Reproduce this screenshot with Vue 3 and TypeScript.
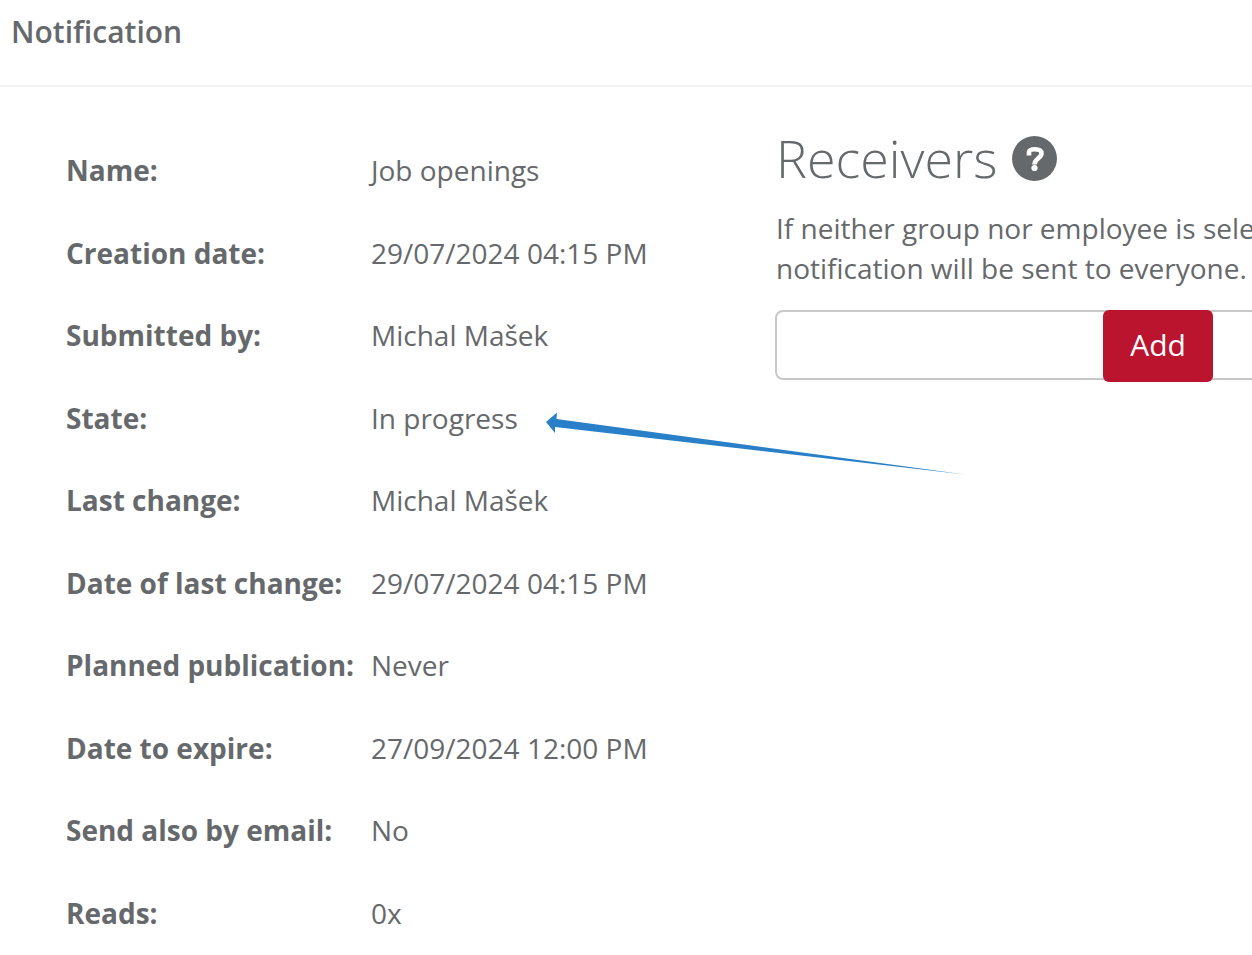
<script setup lang="ts">
interface Detail { label: string; value: string }
const details: Detail[] = [
  { label: 'Name:', value: 'Job openings' },
  { label: 'Creation date:', value: '29/07/2024 04:15 PM' },
  { label: 'Submitted by:', value: 'Michal Mašek' },
  { label: 'State:', value: 'In progress' },
  { label: 'Last change:', value: 'Michal Mašek' },
  { label: 'Date of last change:', value: '29/07/2024 04:15 PM' },
  { label: 'Planned publication:', value: 'Never' },
  { label: 'Date to expire:', value: '27/09/2024 12:00 PM' },
  { label: 'Send also by email:', value: 'No' },
  { label: 'Reads:', value: '0x' },
]
</script>

<template>
  <div class="page">
    <header class="header"><h1>Notification</h1></header>
    <main class="content">
      <dl class="details">
        <div v-for="d in details" :key="d.label" class="row">
          <dt>{{ d.label }}</dt>
          <dd>{{ d.value }}</dd>
        </div>
      </dl>
      <section class="receivers">
        <h2>
          <span>Receivers</span>
          <button class="help" type="button" aria-label="Help">
            <svg viewBox="0 0 45 45" aria-hidden="true">
              <circle cx="22.5" cy="22.5" r="22.5" fill="#66696b" />
              <path d="M17 19.5V16Q17.500 13.300 23 13.300Q29.500 13.300 29.500 17.500C29.500 22.300 22.500 22.500 22.500 28.500" fill="none" stroke="#fff" stroke-width="4.600" />
              <circle cx="22.500" cy="32" r="3.100" fill="#fff" />
            </svg>
          </button>
        </h2>
        <p><label for="receiver">If neither group nor employee is selected,<br>notification will be sent to everyone.</label></p>
        <div class="picker">
          <input id="receiver" type="text">
          <button class="add" type="button">Add</button>
        </div>
      </section>
    </main>
    <svg class="arrow" viewBox="0 0 420 64" aria-hidden="true">
      <path fill="#2a80c8" d="M0 10L11 0.500L10.500 7L419 62.500L9 15L9 21Z" />
    </svg>
  </div>
</template>

<style>
body { margin: 0; background: #fff; }
</style>

<style scoped>
.page { position: relative; overflow: hidden; color: #66696b; font: 28px/40px "Open Sans", sans-serif; }
.header { padding: 12px 11px 33px; border-bottom: 2px solid #f2f2f2; }
h1 { margin: 0; font-size: 30px; line-height: 40px; font-weight: 600; }
.content { display: grid; grid-template-columns: 710px minmax(540px, 1fr); align-items: start; padding: 0 0 20px 66px; }
.details { display: flex; flex-direction: column; justify-content: space-between; min-height: 783px; margin: 63px 0 0; }
.row { display: grid; grid-template-columns: 305px 1fr; }
dt { font-weight: 700; white-space: nowrap; }
dd { margin: 0; }
.receivers { padding-top: 36px; }
h2 { display: flex; align-items: center; gap: 15px; margin: 0; font-size: 52px; line-height: 70px; font-weight: 300; }
.help { width: 45px; height: 45px; padding: 0; border: 0; background: none; }
.help svg { display: block; width: 100%; height: 100%; }
p { margin: 15px 0 22px; white-space: nowrap; }
.picker { display: flex; height: 70px; margin-left: -1px; box-sizing: border-box; border: 2px solid #c8c8c8; border-radius: 8px; }
input { box-sizing: border-box; width: 326px; min-width: 0; border: 0; padding: 0 16px; background: none; font: inherit; color: inherit; outline: none; }
.add { width: 110px; height: 72px; margin-top: -2px; padding: 0 0 2px; border: 0; border-radius: 6px; background: #ba142f; color: #fff; font: 30px/40px "Open Sans", sans-serif; }
.arrow { position: absolute; left: 546px; top: 412px; width: 420px; height: 64px; }
</style>
